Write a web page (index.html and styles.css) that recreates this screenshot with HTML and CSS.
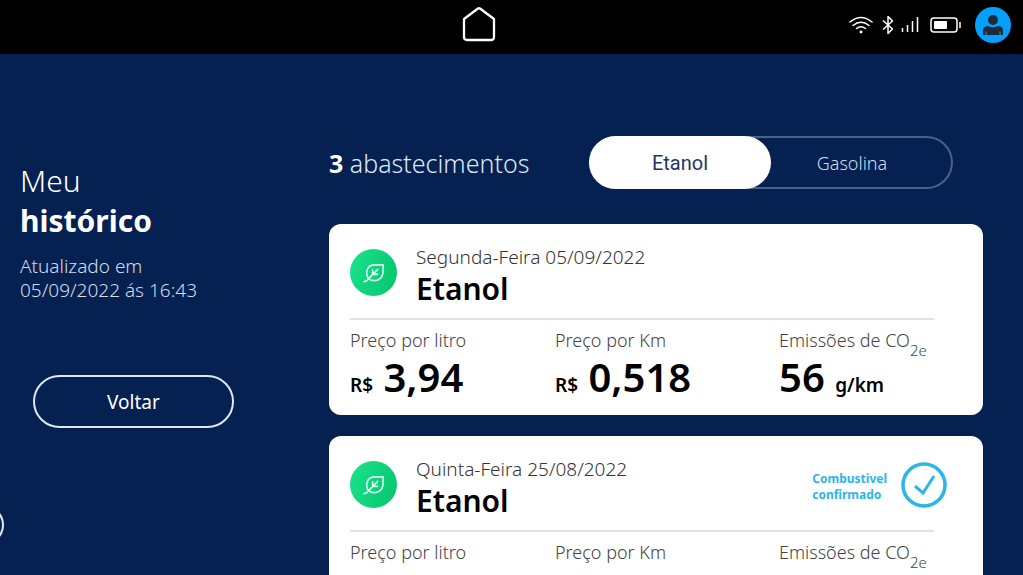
FILE: index.html
```html
<!DOCTYPE html>
<html lang="pt-BR">
<head>
    <meta charset="UTF-8">
    <title>Meu histórico</title>
    <meta name="viewport" content="width=device-width, initial-scale=1.0">
    <link rel="stylesheet" href="styles.css">
</head>
<body>
    <header class="topbar">
        <a class="home" href="#" aria-label="Início">
            <svg width="34" height="36" viewBox="0 0 34 36" fill="none" stroke="#fff" stroke-width="2.300" stroke-linejoin="round">
                <path d="M2 12L16 1.500Q17 1 18 1.500L32 12V30Q32 33 29 33H5Q2 33 2 30Z"/>
            </svg>
        </a>
        <div class="status">
            <svg width="26" height="18" viewBox="0 0 26 18" fill="none" stroke="#fff" stroke-width="1.500" stroke-linecap="round">
                <path d="M2 6Q13-3 24 6M5 9.500Q13 3 21 9.500M8.500 12.500Q13 9 17.500 12.500"/>
                <circle cx="13" cy="16" r=".7" fill="#fff"/>
            </svg>
            <svg class="bluetooth" width="12" height="20" viewBox="0 0 12 20" fill="none" stroke="#fff" stroke-width="1.500" stroke-linejoin="round">
                <path d="M1 5.500L10.500 14L6 18.500V1.500L10.500 6L1 14.500"/>
            </svg>
            <svg class="signal" width="18" height="17" viewBox="0 0 18 17" stroke="#fff" stroke-width="1.500">
                <path d="M1.500 12V16M6.500 9V16M11.500 5V16M16.500 1V16"/>
            </svg>
            <svg class="battery" width="31" height="16" viewBox="0 0 31 16" fill="none" stroke="#fff" stroke-width="1.500">
                <rect x="1" y="1" width="26" height="14" rx="3"/>
                <rect x="4" y="4" width="13" height="8" rx="1" fill="#fff" stroke="none"/>
                <path d="M30 5V11"/>
            </svg>
            <button class="avatar" aria-label="Perfil">
                <svg width="22" height="22" viewBox="0 0 22 22" fill="#1c2b36">
                    <circle cx="11" cy="6" r="5"/>
                    <path d="M1 21V17Q1 12 6 12Q11 14.500 16 12Q21 12 21 17V21H18.500V17.500H17.500V21H4.500V17.500H3.500V21Z"/>
                </svg>
            </button>
        </div>
    </header>

    <div class="page">
        <aside class="sidebar">
            <h1 class="title">Meu <strong>histórico</strong></h1>
            <p class="updated">Atualizado em<br>05/09/2022 ás 16:43</p>
            <button class="back-btn">Voltar</button>
            <button class="edge-btn" aria-label="Menu"></button>
        </aside>

        <main class="content">
            <div class="content-head">
                <h2 class="count"><strong>3</strong> abastecimentos</h2>
                <div class="switch">
                    <button class="switch-btn active">Etanol</button>
                    <button class="switch-btn">Gasolina</button>
                </div>
            </div>

            <article class="card">
                <div class="card-head">
                    <span class="leaf">
                        <svg width="22" height="20" viewBox="0 0 24 22" fill="none" stroke="#d9fff0" stroke-width="1.800" stroke-linecap="round" stroke-linejoin="round">
                            <path d="M1 20.500Q4 20.500 6 17.500L16 7M10.500 7.500V12.500H16M6 17.500C2 11 4 2 13 2H22V9C22 18 13 22 6 17.500Z"/>
                        </svg>
                    </span>
                    <div>
                        <p class="date">Segunda-Feira 05/09/2022</p>
                        <h3 class="fuel">Etanol</h3>
                    </div>
                </div>
                <div class="metrics">
                    <div>
                        <p class="label">Preço por litro</p>
                        <p class="value"><small>R$</small> 3,94</p>
                    </div>
                    <div>
                        <p class="label">Preço por Km</p>
                        <p class="value"><small>R$</small> 0,518</p>
                    </div>
                    <div>
                        <p class="label">Emissões de CO<sub>2e</sub></p>
                        <p class="value">56 <small>g/km</small></p>
                    </div>
                </div>
            </article>

            <article class="card">
                <div class="card-head">
                    <span class="leaf">
                        <svg width="22" height="20" viewBox="0 0 24 22" fill="none" stroke="#d9fff0" stroke-width="1.800" stroke-linecap="round" stroke-linejoin="round">
                            <path d="M1 20.500Q4 20.500 6 17.500L16 7M10.500 7.500V12.500H16M6 17.500C2 11 4 2 13 2H22V9C22 18 13 22 6 17.500Z"/>
                        </svg>
                    </span>
                    <div>
                        <p class="date">Quinta-Feira 25/08/2022</p>
                        <h3 class="fuel">Etanol</h3>
                    </div>
                    <div class="confirmed">
                        <span>Combustivel<br>confirmado</span>
                        <svg width="46" height="46" viewBox="0 0 46 46" fill="none" stroke="#2cb5e8" stroke-width="3.500">
                            <circle cx="23" cy="23" r="21"/>
                            <path d="M14 24L22 31L33 14" stroke-width="3"/>
                        </svg>
                    </div>
                </div>
                <div class="metrics">
                    <div>
                        <p class="label">Preço por litro</p>
                    </div>
                    <div>
                        <p class="label">Preço por Km</p>
                    </div>
                    <div>
                        <p class="label">Emissões de CO<sub>2e</sub></p>
                    </div>
                </div>
            </article>
        </main>
    </div>
</body>
</html>
```
FILE: styles.css
```css
* {
    box-sizing: border-box;
}
body {
    margin: 0;
    height: 100vh;
    display: flex;
    flex-direction: column;
    overflow: hidden;
    background: #042152;
    color: #fff;
    font-family: "Noto Sans", sans-serif;
}
h1, h2, h3, p {
    margin: 0;
    font-weight: 300;
}
strong {
    font-weight: 700;
}
button {
    font-family: inherit;
    cursor: pointer;
}

/* top bar */
.topbar {
    flex: none;
    height: 54px;
    display: grid;
    grid-template-columns: 1fr auto 1fr;
    align-items: center;
    padding: 0 12px 5px 0;
    background: #000;
}
.home {
    grid-column: 2;
    display: flex;
    margin-right: 54px;
}
.status {
    display: flex;
    align-items: center;
    justify-content: flex-end;
}
.bluetooth {
    margin-left: 8px;
}
.signal {
    margin-left: 7px;
}
.battery {
    margin-left: 11px;
}
.avatar {
    display: flex;
    align-items: center;
    justify-content: center;
    width: 36px;
    height: 36px;
    margin-left: 14px;
    padding: 0;
    border: none;
    border-radius: 50%;
    background: #069ffc;
}

.page {
    flex: 1;
    min-height: 0;
    display: grid;
    grid-template-columns: 329px 1fr;
    padding-right: 40px;
}

/* left column */
.sidebar {
    position: relative;
    padding: 107px 20px 0;
}
.title {
    font-size: 30px;
    line-height: 40px;
}
.title strong {
    display: block;
}
.updated {
    margin-top: 13px;
    font-size: 19px;
    line-height: 24px;
    color: #d3dcec;
}
.back-btn {
    display: block;
    width: 201px;
    height: 53px;
    margin: 73px 0 0 13px;
    border: 2px solid #dfe8f2;
    border-radius: 27px;
    background: none;
    color: #fff;
    font-size: 19px;
}
.edge-btn {
    position: absolute;
    left: -36px;
    top: 451px;
    width: 40px;
    height: 40px;
    border: 2px solid #dfe8f2;
    border-radius: 50%;
    background: none;
}

/* history */
.content {
    display: flex;
    flex-direction: column;
    min-height: 0;
    padding-top: 82px;
    overflow: hidden;
}
.content-head {
    display: flex;
    align-items: center;
    justify-content: space-between;
    margin-bottom: 35px;
    padding-right: 30px;
}
.count {
    font-size: 25px;
    line-height: 32px;
    color: #dfe8f5;
}
.count strong {
    color: #fff;
}
.switch {
    display: flex;
    width: 364px;
    height: 53px;
    border-radius: 27px;
    box-shadow: inset 0 0 0 2px #4a6188;
}
.switch-btn {
    width: 50%;
    padding: 0 20px 0 0;
    border: none;
    border-radius: 27px;
    background: none;
    color: #d3dcec;
    font-size: 18px;
    font-weight: 300;
}
.switch-btn.active {
    padding: 0;
    background: #fff;
    color: #23365f;
    font-family: Roboto, sans-serif;
    font-size: 20px;
    font-weight: 400;
}

.card {
    flex: none;
    margin-bottom: 21px;
    padding: 20px 36px 15px 21px;
    border-radius: 12px;
    background: #fff;
    color: #000;
}
/* the last card runs on below the fold */
.card:last-child {
    flex: 1 0 auto;
    margin-bottom: 0;
    border-radius: 12px 12px 0 0;
}
.card-head {
    display: flex;
    align-items: flex-start;
}
.leaf {
    display: flex;
    align-items: center;
    justify-content: center;
    width: 47px;
    height: 47px;
    margin: 5px 19px 0 0;
    border-radius: 50%;
    background: linear-gradient(110deg, #1be38c, #04c46c);
}
.date {
    font-size: 19px;
    line-height: 26px;
    color: #333;
}
.fuel {
    font-size: 30px;
    line-height: 38px;
    font-weight: 600;
}
.confirmed {
    display: flex;
    align-items: center;
    gap: 14px;
    margin: 6px 0 0 auto;
    color: #2cb5e8;
    font-size: 12px;
    line-height: 16px;
    font-weight: 700;
}
.confirmed span {
    padding-top: 4px;
}
.metrics {
    display: grid;
    grid-template-columns: 205px 224px 1fr;
    margin: 10px 13px 0 0;
    padding-top: 7px;
    border-top: 2px solid #e2e2e2;
}
.label {
    font-size: 18px;
    line-height: 26px;
    color: #444;
    white-space: nowrap;
}
.label sub {
    font-size: 15px;
    line-height: 0;
    vertical-align: -9px;
}
.value {
    font-size: 40px;
    line-height: 47px;
    font-weight: 600;
    white-space: nowrap;
}
.value small {
    font-size: 19px;
    line-height: 0;
}
```
